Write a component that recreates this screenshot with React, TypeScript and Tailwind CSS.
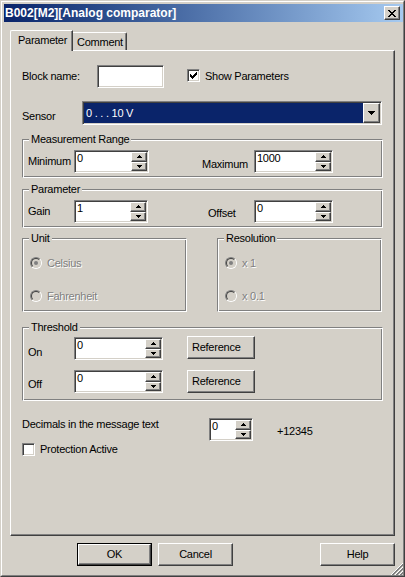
import React from 'react';

// classic 3D edges
const raised =
  'border border-t-white border-l-white border-r-[#404040] border-b-[#404040] shadow-[inset_-1px_-1px_0_#808080]';
const sunken =
  'border border-t-[#808080] border-l-[#808080] border-r-white border-b-white shadow-[inset_1px_1px_0_#404040,inset_-1px_-1px_0_#d4d0c8]';
const etched =
  'border border-t-[#808080] border-l-[#808080] border-r-white border-b-white shadow-[inset_1px_1px_0_#fff,inset_-1px_-1px_0_#808080]';
const disabledText = 'text-[#808080] [text-shadow:1px_1px_0_#fff]';

const UP = 'M2 0h1v1h-1zM1 1h3v1h-3zM0 2h5v1h-5z';
const DOWN = 'M0 0h5v1h-5zM1 1h3v1h-3zM2 2h1v1h-1z';
const DROP = 'M0 0h7v1h-7zM1 1h5v1h-5zM2 2h3v1h-3zM3 3h1v1h-1z';
const CLOSE =
  'M0 0h2v1h-2zM6 0h2v1h-2zM1 1h2v1h-2zM5 1h2v1h-2zM2 2h4v1h-4zM3 3h2v1h-2zM2 4h4v1h-4zM1 5h2v1h-2zM5 5h2v1h-2zM0 6h2v1h-2zM6 6h2v1h-2z';
const CHECK =
  'M6 0h1v1h-1zM5 1h2v1h-2zM0 2h1v1h-1zM4 2h3v1h-3zM0 3h2v1h-2zM3 3h3v1h-3zM0 4h5v1h-5zM1 5h3v1h-3zM2 6h1v1h-1z';

function Pixels({ d, w, h }: { d: string; w: number; h: number }) {
  return (
    <svg width={w} height={h} viewBox={`0 0 ${w} ${h}`} shapeRendering="crispEdges">
      <path d={d} fill="#000" />
    </svg>
  );
}

function Spin({ value, className }: { value: string; className: string }) {
  return (
    <div className={`flex h-[23px] bg-white p-[1px] ${sunken} ${className}`}>
      <div className="flex-1 pl-[1px] leading-[13px]">{value}</div>
      <div className="flex w-[16px] flex-col">
        <div className={`flex flex-1 items-center justify-center bg-[#d4d0c8] ${raised}`}>
          <Pixels d={UP} w={5} h={3} />
        </div>
        <div className={`flex flex-1 items-center justify-center bg-[#d4d0c8] ${raised}`}>
          <Pixels d={DOWN} w={5} h={3} />
        </div>
      </div>
    </div>
  );
}

function Check({ checked }: { checked?: boolean }) {
  return (
    <div className={`flex h-[13px] w-[13px] shrink-0 items-center justify-center bg-white ${sunken}`}>
      {checked && <Pixels d={CHECK} w={7} h={7} />}
    </div>
  );
}

function Radio({ checked }: { checked?: boolean }) {
  return (
    <div className="h-[12px] w-[12px] shrink-0 rounded-full border border-t-[#808080] border-l-[#808080] border-r-white border-b-white">
      <div className="flex h-full w-full items-center justify-center rounded-full border border-t-[#404040] border-l-[#404040] border-r-[#d4d0c8] border-b-[#d4d0c8] bg-[#d4d0c8]">
        {checked && <div className="h-[4px] w-[4px] rounded-full bg-[#808080]" />}
      </div>
    </div>
  );
}

function Group({ title, className, children }: { title: string; className?: string; children: React.ReactNode }) {
  return (
    <div className={`relative ${etched} ${className ?? ''}`}>
      <span className="absolute left-[6px] -top-[7px] bg-[#d4d0c8] px-[2px] leading-[13px]">{title}</span>
      {children}
    </div>
  );
}

function Button({ label, className, isDefault }: { label: string; className?: string; isDefault?: boolean }) {
  if (isDefault) {
    return (
      <div className={`h-[23px] border border-black ${className ?? ''}`}>
        <div className={`flex h-full items-center justify-center bg-[#d4d0c8] ${raised}`}>{label}</div>
      </div>
    );
  }
  return <div className={`flex h-[23px] items-center justify-center bg-[#d4d0c8] ${raised} ${className ?? ''}`}>{label}</div>;
}

function RadioRow({ label, checked }: { label: string; checked?: boolean }) {
  return (
    <div className="flex h-[12px] items-center">
      <Radio checked={checked} />
      <span className={`ml-[5px] leading-[13px] ${disabledText}`}>{label}</span>
    </div>
  );
}

export default function App() {
  return (
    <div className="relative h-[577px] w-[405px] overflow-hidden border border-t-[#d4d0c8] border-l-[#d4d0c8] border-r-[#404040] border-b-[#404040] bg-[#d4d0c8] text-[11px] leading-[13px] tracking-[-0.25px] text-black [font-family:'Liberation_Sans',Arial,sans-serif] select-none">
      <div className="h-full border border-t-white border-l-white border-r-[#808080] border-b-[#808080] pl-[2px] pt-[2px]">
        {/* title bar */}
        <div className="flex h-[18px] items-center bg-linear-to-r from-[#0a246a] to-[#a6caf0] pl-[1px] pr-[3px]">
          <span className="flex-1 text-[12px] font-bold tracking-normal text-white">B002[M2][Analog comparator]</span>
          <div className={`flex h-[14px] w-[16px] items-center justify-center bg-[#d4d0c8] ${raised}`}>
            <Pixels d={CLOSE} w={8} h={7} />
          </div>
        </div>

        <div className="pl-[6px] pr-[8px] pt-[8px]">
          {/* tabs */}
          <div className="flex h-[20px] items-end">
            <div className="relative z-10 -mb-px h-[21px] w-[63px] rounded-tl-[2px] border-l border-t border-r border-white border-r-[#404040] bg-[#d4d0c8] pl-[7px] pt-[3px] shadow-[inset_-1px_0_0_#808080]">
              Parameter
            </div>
            <div className="h-[18px] w-[54px] rounded-tr-[2px] border-t border-r border-white border-r-[#404040] bg-[#d4d0c8] pl-[4px] pt-[3px] shadow-[inset_-1px_0_0_#808080]">
              Comment
            </div>
          </div>

          {/* panel */}
          <div className="h-[486px] border-l border-t border-r border-b border-white border-r-[#404040] border-b-[#404040] px-[11px] shadow-[inset_-1px_-1px_0_#808080]">
            <div className="mt-[14px] flex h-[23px] items-center">
              <span className="w-[75px]">Block name:</span>
              <div className={`h-[23px] w-[67px] bg-white ${sunken}`} />
              <div className="ml-[23px] mb-[2px]">
                <Check checked />
              </div>
              <span className="ml-[5px] mb-[1px]">Show Parameters</span>
            </div>

            <div className="mt-[13px] flex h-[24px] items-center">
              <span className="w-[60px] pt-[6px]">Sensor</span>
              <div className={`flex h-[24px] w-[300px] bg-white p-[1px] ${sunken}`}>
                <div className="flex flex-1 items-center bg-[#0a246a] pl-[2px] text-white">0 . . . 10 V</div>
                <div className={`flex w-[17px] items-center justify-center bg-[#d4d0c8] ${raised}`}>
                  <Pixels d={DROP} w={7} h={4} />
                </div>
              </div>
            </div>

            <Group title="Measurement Range" className="mt-[14px] pl-[5px] pt-[10px] pb-[4px]">
              <div className="flex h-[23px] items-center">
                <span className="w-[46px]">Minimum</span>
                <Spin value="0" className="w-[75px]" />
                <span className="ml-[53px] w-[52px] pt-[5px]">Maximum</span>
                <Spin value="1000" className="w-[79px]" />
              </div>
            </Group>

            <Group title="Parameter" className="mt-[11px] pl-[5px] pt-[10px] pb-[4px]">
              <div className="flex h-[23px] items-center">
                <span className="w-[46px]">Gain</span>
                <Spin value="1" className="w-[74px]" />
                <span className="ml-[60px] w-[46px] pt-[3px]">Offset</span>
                <Spin value="0" className="w-[79px]" />
              </div>
            </Group>

            <div className="mt-[10px] flex gap-[30px]">
              <Group title="Unit" className="flex h-[74px] w-[165px] flex-col gap-[21px] pl-[7px] pt-[18px]">
                <RadioRow label="Celsius" checked />
                <RadioRow label="Fahrenheit" />
              </Group>
              <Group title="Resolution" className="flex h-[74px] w-[165px] flex-col gap-[21px] pl-[7px] pt-[18px]">
                <RadioRow label="x 1" checked />
                <RadioRow label="x 0.1" />
              </Group>
            </div>

            <Group title="Threshold" className="mt-[15px] flex flex-col gap-[10px] pl-[5px] pt-[9px] pb-[7px]">
              <div className="flex h-[23px] items-center">
                <span className="w-[46px] pt-[8px]">On</span>
                <Spin value="0" className="w-[89px]" />
                <Button label="Reference" className="ml-[24px] w-[68px] -translate-y-px !justify-start pl-[4px]" />
              </div>
              <div className="flex h-[23px] items-center">
                <span className="w-[46px] pt-[5px]">Off</span>
                <Spin value="0" className="w-[89px]" />
                <Button label="Reference" className="ml-[24px] w-[68px] !justify-start pl-[4px]" />
              </div>
            </Group>

            <div className="mt-[17px] flex items-start">
              <span className="w-[187px]">Decimals in the message text</span>
              <Spin value="0" className="w-[44px]" />
              <span className="ml-[24px] pt-[7px]">+12345</span>
            </div>

            <div className="mt-[2px] flex h-[13px] items-center">
              <Check />
              <span className="ml-[5px]">Protection Active</span>
            </div>
          </div>

          {/* dialog buttons */}
          <div className="mt-[7px] flex">
            <Button label="OK" isDefault className="ml-[67px] w-[75px]" />
            <Button label="Cancel" className="ml-[6px] w-[75px]" />
            <Button label="Help" className="ml-auto w-[75px]" />
          </div>
        </div>
      </div>

      {/* size grip */}
      <svg className="absolute bottom-[1px] right-[1px]" width="13" height="13" viewBox="0 0 13 13" shapeRendering="crispEdges">
        <path d="M13 1L1 13M13 5L5 13M13 9L9 13" stroke="#fff" strokeWidth="1" />
        <path d="M13 2L2 13M13 3L3 13M13 6L6 13M13 7L7 13M13 10L10 13M13 11L11 13" stroke="#808080" strokeWidth="1" />
      </svg>
    </div>
  );
}
